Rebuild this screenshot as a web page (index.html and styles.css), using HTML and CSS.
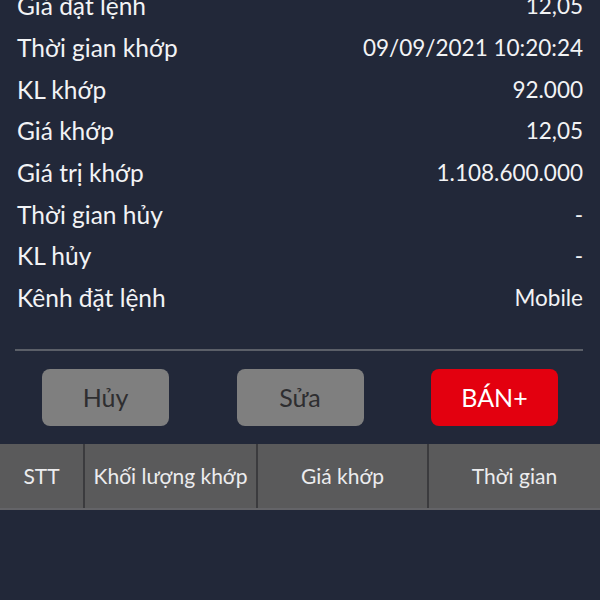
FILE: index.html
```html
<!DOCTYPE html>
<html lang="vi">
<head>
<meta charset="utf-8">
<link rel="stylesheet" href="styles.css">
</head>
<body>
<div class="screen">
  <div class="details">
    <div class="row"><span class="label">Giá đặt lệnh</span><span class="value">12,05</span></div>
    <div class="row"><span class="label">Thời gian khớp</span><span class="value">09/09/2021 10:20:24</span></div>
    <div class="row"><span class="label">KL khớp</span><span class="value">92.000</span></div>
    <div class="row"><span class="label">Giá khớp</span><span class="value">12,05</span></div>
    <div class="row"><span class="label">Giá trị khớp</span><span class="value">1.108.600.000</span></div>
    <div class="row"><span class="label">Thời gian hủy</span><span class="value">-</span></div>
    <div class="row"><span class="label">KL hủy</span><span class="value">-</span></div>
    <div class="row"><span class="label">Kênh đặt lệnh</span><span class="value">Mobile</span></div>
  </div>
  <div class="divider"></div>
  <div class="actions">
    <button class="btn btn-gray">Hủy</button>
    <button class="btn btn-gray">Sửa</button>
    <button class="btn btn-red">BÁN+</button>
  </div>
  <div class="table-head">
    <div class="th th-stt">STT</div>
    <div class="th th-kl">Khối lượng khớp</div>
    <div class="th th-gia">Giá khớp</div>
    <div class="th th-time">Thời gian</div>
  </div>
</div>
</body>
</html>
```
FILE: styles.css
```css
html, body {
  margin: 0;
  padding: 0;
  background: #222839;
  width: 600px;
  height: 600px;
  overflow: hidden;
}
.screen {
  font-family: Lato, "Noto Sans", sans-serif;
  color: #f2f3f5;
}
.details {
  margin-top: -15px;
  padding: 0 17px;
}
.row {
  height: 41.7px;
  display: flex;
  align-items: center;
  justify-content: space-between;
}
.label {
  font-size: 24.5px;
}
.value {
  font-size: 22.5px;
}
.divider {
  margin: 30px 17px 0 15px;
  height: 2px;
  background: #5b5f68;
}
.actions {
  display: flex;
  justify-content: space-between;
  padding: 0 42px;
  margin-top: 18px;
}
.btn {
  width: 127px;
  height: 57px;
  border: none;
  border-radius: 8px;
  font-family: Lato, "Noto Sans", sans-serif;
  font-size: 25px;
  padding: 0;
}
.btn-gray {
  background: #7f7f7f;
  color: #2e2e30;
}
.btn-red {
  background: #e3000f;
  color: #ffffff;
}
.table-head {
  margin-top: 18px;
  height: 66px;
  display: flex;
  background: #5a5a5b;
  border-bottom: 2px solid #646468;
  box-sizing: border-box;
}
.th {
  box-sizing: border-box;
  display: flex;
  align-items: center;
  justify-content: center;
  font-size: 21px;
  color: #ececee;
  border-right: 2px solid #3b3b3e;
}
.th-stt { width: 85px; }
.th-kl { width: 173px; }
.th-gia { width: 171px; }
.th-time { flex: 1; border-right: none; }
```
